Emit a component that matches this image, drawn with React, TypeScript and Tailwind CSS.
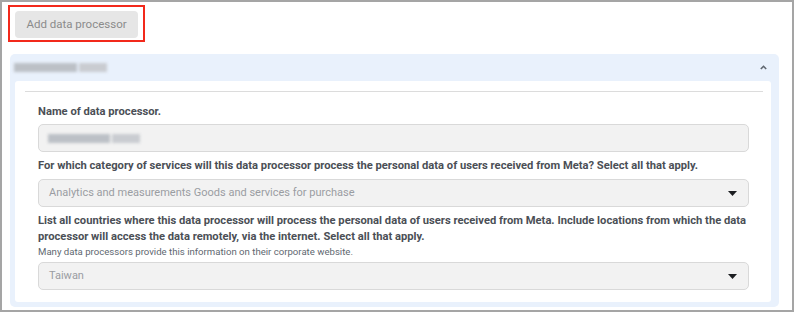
const font = { fontFamily: 'Roboto, "Liberation Sans", sans-serif' }

function Blur({ w }: { w: number }) {
  return (
    <div className="flex h-[9px] items-center gap-[2px] blur-[1.5px]" style={{ width: w }}>
      <div className="h-full flex-1 bg-[#bcc0c6]" />
      <div className="h-full w-[30%] bg-[#c9ccd1]" />
    </div>
  )
}

function Caret() {
  return (
    <svg width="9" height="5" viewBox="0 0 9 5" className="shrink-0">
      <path d="M0 0h9L4.5 5z" fill="#1c1e21" />
    </svg>
  )
}

function SelectBox({ value }: { value: string }) {
  return (
    <div className="flex h-[28px] items-center justify-between rounded-[5px] border border-[#d9d9d9] bg-[#f2f2f2] pl-[10px] pr-[11px] text-[11px] text-[#9a9da2]">
      <span>{value}</span>
      <Caret />
    </div>
  )
}

export default function App() {
  return (
    <div style={font} className="box-border h-[312px] w-[794px] border-2 border-[#a5a5a5] bg-white pl-[8px] pr-[13px] pt-[3px]">
      <div className="-ml-[2px] inline-block border-2 border-[#f2291b] px-[5px] pt-[4px] pb-[2px]">
        <button type="button" className="h-[27px] w-[123px] rounded-[4px] bg-[#e6e6e6] text-[11.5px] text-[#8b8b8b]">
          Add data processor
        </button>
      </div>

      <div className="mt-[12px] rounded-[5px] bg-[#e9f1fc] pb-[5px] pl-[5px] pr-[8px]">
        <div className="-ml-[1px] flex h-[27px] items-center justify-between pr-[4px]">
          <Blur w={93} />
          <svg width="7" height="5" viewBox="0 0 7 5">
            <path d="M0.8 4L3.5 1.3 6.2 4" fill="none" stroke="#606770" strokeWidth="1.6" />
          </svg>
        </div>

        <div className="rounded-[3px] bg-white pb-[12px] pl-[10px] pr-[8px] pt-[10px]">
          <div className="h-px bg-[#dcdcdc]" />
          <div className="pl-[13px] pr-[14px] pt-[12px] text-[#4b4f56]">
            <div className="text-[11.2px] font-bold leading-[16px]">Name of data processor.</div>
            <div className="mt-[4px] flex h-[28px] items-center rounded-[5px] border border-[#d9d9d9] bg-[#f2f2f2] pl-[9px]">
              <Blur w={92} />
            </div>

            <div className="mt-[6px] text-[11.2px] font-bold leading-[16px]">
              For which category of services will this data processor process the personal data of users received from Meta? Select all that apply.
            </div>
            <div className="mt-[5px]">
              <SelectBox value="Analytics and measurements Goods and services for purchase" />
            </div>

            <div className="mt-[6px] text-[11.2px] font-bold leading-[16px]">
              List all countries where this data processor will process the personal data of users received from Meta. Include locations from which the data processor will access the data remotely, via the internet. Select all that apply.
            </div>
            <div className="text-[9.6px] leading-[13px] text-[#606770]">
              Many data processors provide this information on their corporate website.
            </div>
            <div className="mt-[4px]">
              <SelectBox value="Taiwan" />
            </div>
          </div>
        </div>
      </div>
    </div>
  )
}
